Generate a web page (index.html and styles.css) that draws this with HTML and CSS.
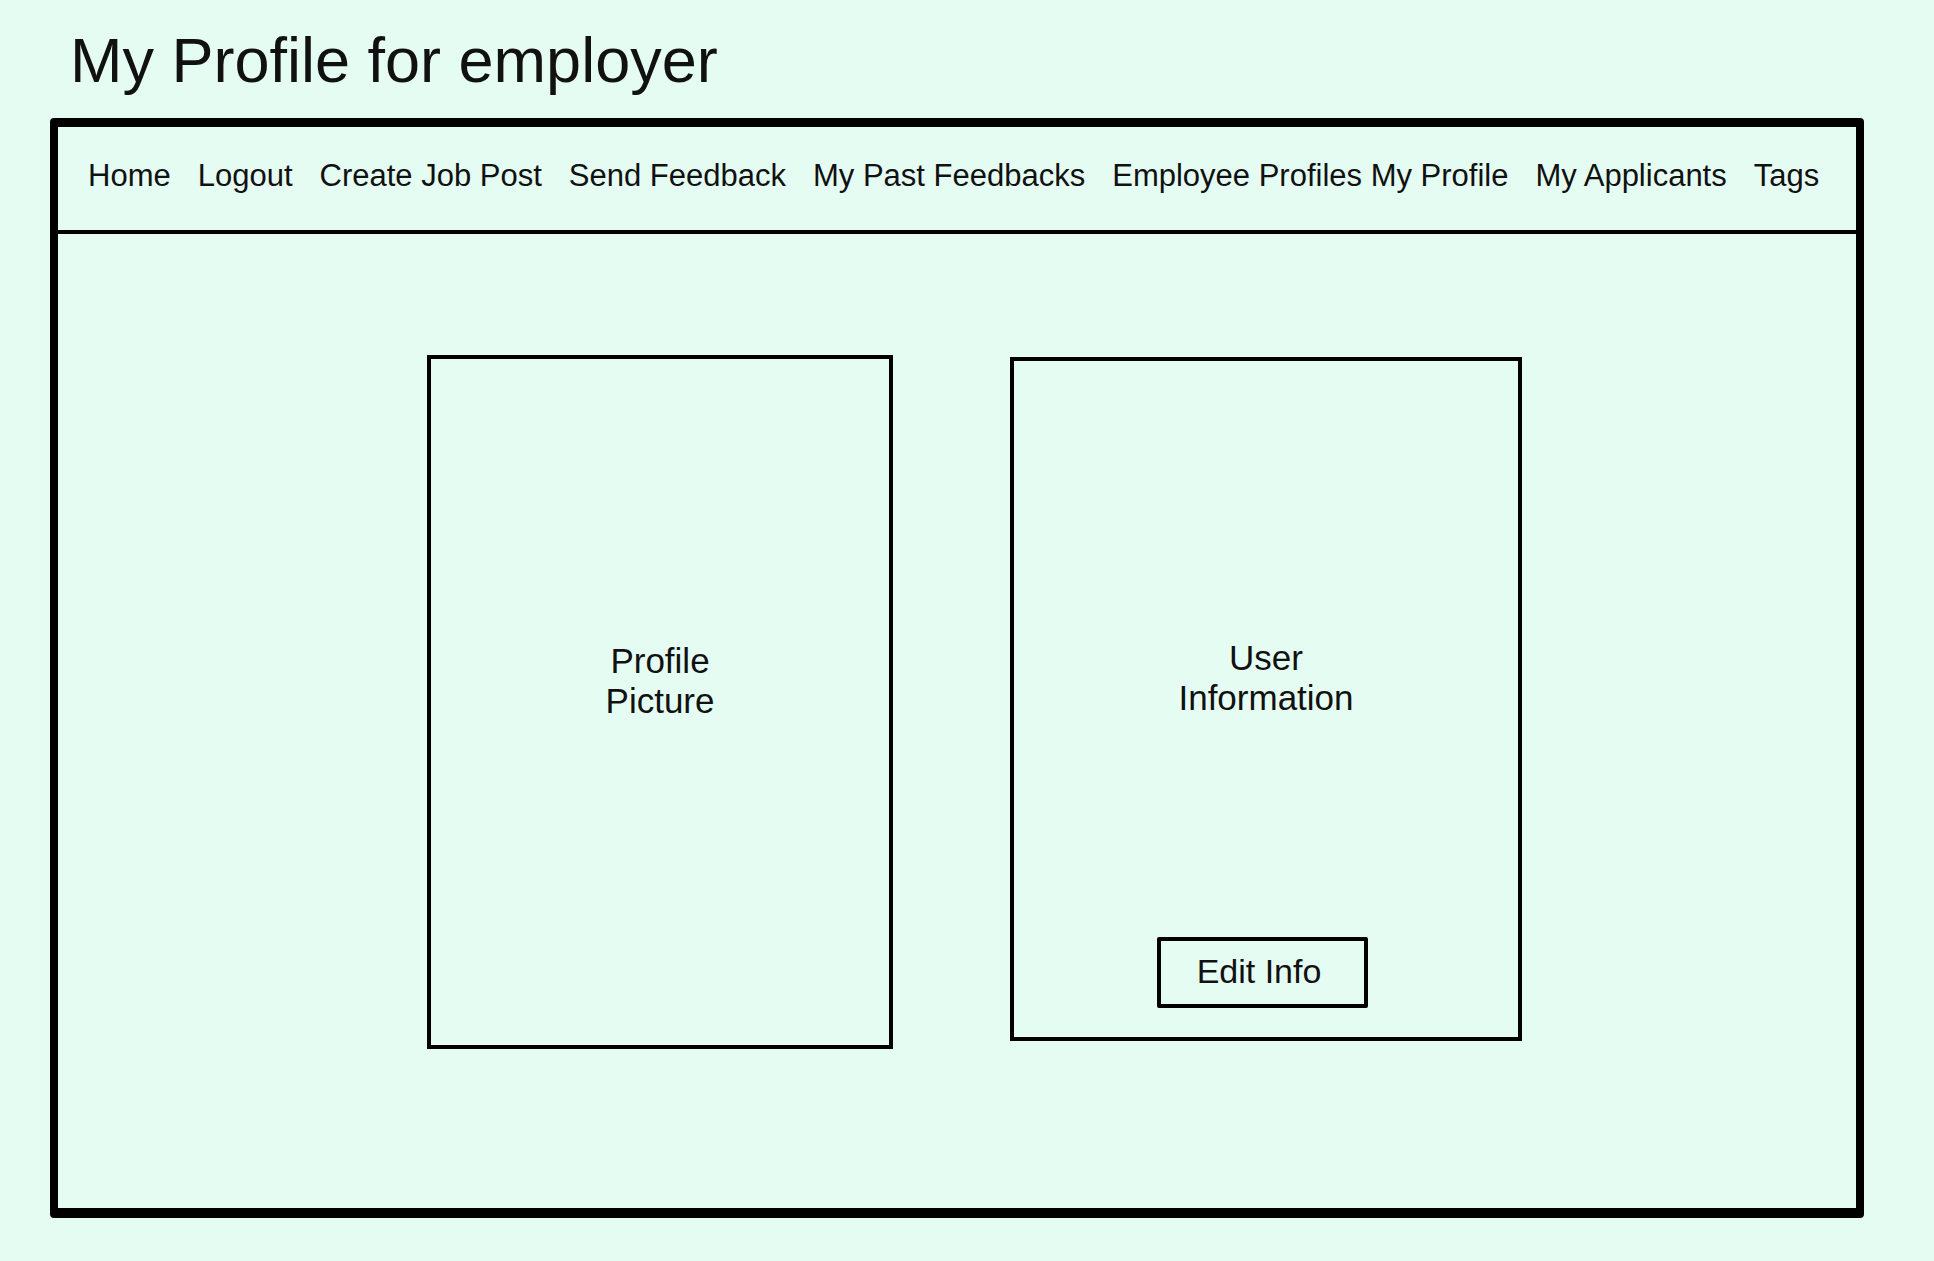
FILE: index.html
```html
<!DOCTYPE html>
<html lang="en">
<head>
<meta charset="utf-8">
<title>My Profile for employer</title>
<link rel="stylesheet" href="styles.css">
</head>
<body>
<div class="page">
  <h1 class="title">My Profile for employer</h1>
  <div class="frame">
    <nav class="nav">
      <a class="nav-link" href="#">Home</a>
      <a class="nav-link" href="#">Logout</a>
      <a class="nav-link" href="#">Create Job Post</a>
      <a class="nav-link" href="#">Send Feedback</a>
      <a class="nav-link" href="#">My Past Feedbacks</a>
      <span class="nav-pair"><a class="nav-link" href="#">Employee Profiles</a> <a class="nav-link" href="#">My Profile</a></span>
      <a class="nav-link" href="#">My Applicants</a>
      <a class="nav-link" href="#">Tags</a>
    </nav>
    <main class="content">
      <section class="card card-picture">
        <div class="card-label">Profile<br>Picture</div>
      </section>
      <section class="card card-info">
        <div class="card-label">User<br>Information</div>
        <button class="edit-btn" type="button">Edit Info</button>
      </section>
    </main>
  </div>
</div>
</body>
</html>
```
FILE: styles.css
```css
* { box-sizing: border-box; }

html, body {
  margin: 0;
  padding: 0;
  background: #e5fcf3;
  color: #111;
  font-family: "Liberation Sans", Arial, sans-serif;
}

.page {
  padding: 24px 0 0 50px;
}

.title {
  margin: 0 0 22px 20px;
  font-size: 63px;
  line-height: 72px;
  font-weight: normal;
}

.frame {
  width: 1814px;
  height: 1100px;
  border-style: solid;
  border-color: #000;
  border-width: 9px 8px 10px 8px;
  border-radius: 4px;
  display: flex;
  flex-direction: column;
}

.nav {
  height: 107px;
  border-bottom: 4px solid #000;
  display: flex;
  align-items: flex-start;
  gap: 27px;
  padding: 31px 0 0 30px;
  font-size: 31px;
  white-space: nowrap;
}

.nav-link {
  color: #111;
  text-decoration: none;
}

.content {
  flex: 1;
  display: flex;
  align-items: flex-start;
  gap: 117px;
  padding: 121px 0 0 369px;
}

.card {
  border: 4px solid #000;
  display: flex;
  flex-direction: column;
  align-items: center;
  font-size: 35px;
  text-align: center;
}

.card-picture {
  width: 466px;
  height: 694px;
  padding-top: 282px;
}

.card-info {
  width: 512px;
  height: 684px;
  margin-top: 2px;
  padding-top: 277px;
  padding-bottom: 29px;
}

.card-label {
  line-height: normal;
}

.edit-btn {
  margin-top: auto;
  margin-right: 7px;
  width: 211px;
  height: 71px;
  border: 4px solid #000;
  border-radius: 2px;
  background: transparent;
  color: #111;
  font-family: "Liberation Sans", Arial, sans-serif;
  font-size: 34px;
  padding: 0 7px 2px 0;
}
```
